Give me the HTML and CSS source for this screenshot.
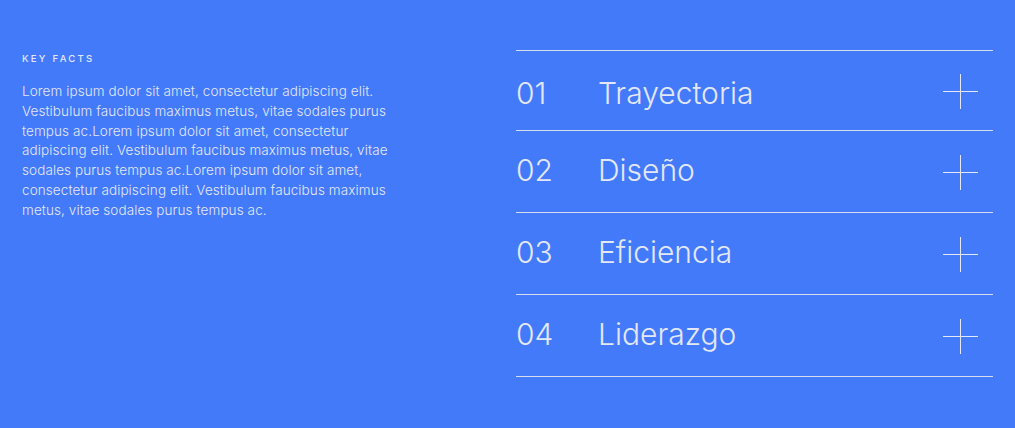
FILE: index.html
```html
<!DOCTYPE html>
<html lang="es">
<head>
<meta charset="utf-8">
<title>Key Facts</title>
<link rel="stylesheet" href="styles.css">
</head>
<body>
<main class="page">
  <section class="intro">
    <h2 class="eyebrow">KEY FACTS</h2>
    <p class="copy">Lorem ipsum dolor sit amet, consectetur adipiscing elit. Vestibulum faucibus maximus metus, vitae sodales purus tempus ac.Lorem ipsum dolor sit amet, consectetur adipiscing elit. Vestibulum faucibus maximus metus, vitae sodales purus tempus ac.Lorem ipsum dolor sit amet, consectetur adipiscing elit. Vestibulum faucibus maximus metus, vitae sodales purus tempus ac.</p>
  </section>
  <ul class="facts">
    <li class="fact"><span class="num">01</span><span class="title">Trayectoria</span><span class="plus"></span></li>
    <li class="fact"><span class="num">02</span><span class="title">Diseño</span><span class="plus"></span></li>
    <li class="fact"><span class="num">03</span><span class="title">Eficiencia</span><span class="plus"></span></li>
    <li class="fact"><span class="num">04</span><span class="title">Liderazgo</span><span class="plus"></span></li>
  </ul>
</main>
</body>
</html>
```
FILE: styles.css
```css
html, body {
  margin: 0;
  padding: 0;
  background: #437afa;
}
body {
  width: 1015px;
  height: 428px;
  overflow: hidden;
  font-family: Inter, "Liberation Sans", sans-serif;
  color: #e4e8f6;
}
.page {
  display: flex;
  align-items: flex-start;
  padding: 50px 22px 0 22px;
}
.intro {
  width: 372px;
  flex: none;
}
.eyebrow {
  margin: 3px 0 0 0;
  font-size: 9.5px;
  font-weight: 500;
  letter-spacing: 2.3px;
  line-height: 11px;
}
.copy {
  margin: 18px 0 0 0;
  font-size: 13.5px;
  line-height: 19.8px;
  font-weight: 300;
  letter-spacing: 0.1px;
}
.facts {
  list-style: none;
  margin: 0 0 0 122px;
  padding: 0;
  width: 477px;
  border-top: 1px solid #d8dcf0;
}
.fact {
  display: flex;
  align-items: center;
  height: 81px;
  border-bottom: 1px solid #d8dcf0;
  font-weight: 300;
  font-size: 30px;
  letter-spacing: 0;
}
.fact:first-child {
  height: 79px;
}
.num {
  width: 82px;
  flex: none;
  padding-bottom: 4px;
}
.title {
  flex: 1;
  padding-bottom: 4px;
}
.fact:first-child .num,
.fact:first-child .title {
  padding-bottom: 0;
  padding-top: 4px;
}
.plus {
  position: relative;
  width: 35px;
  height: 35px;
  margin: 2px 15px 0 0;
  flex: none;
}
.plus::before,
.plus::after {
  content: "";
  position: absolute;
  background: #e4e8f6;
}
.plus::before {
  left: 0;
  right: 0;
  top: 17px;
  height: 1.2px;
}
.plus::after {
  top: 0;
  bottom: 0;
  left: 17px;
  width: 1.2px;
}
```
